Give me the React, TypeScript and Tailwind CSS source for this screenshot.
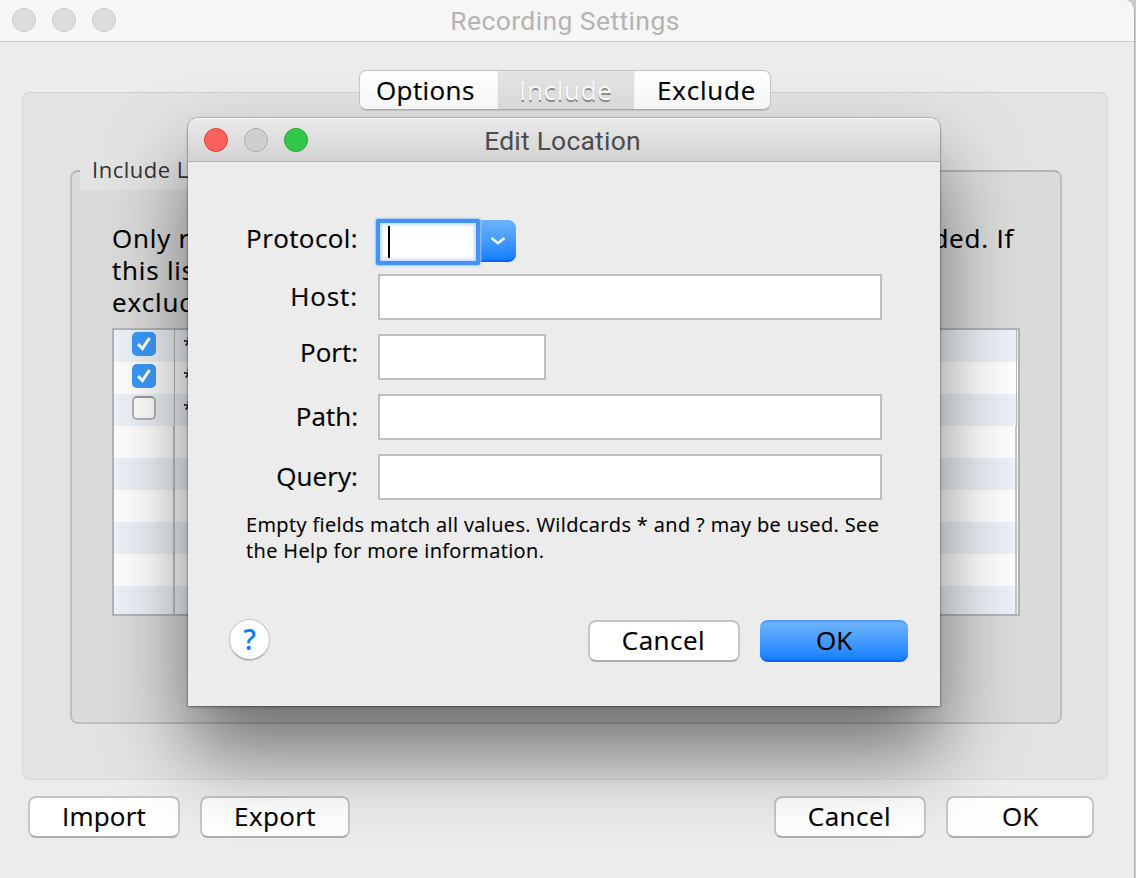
import type { ReactNode } from "react";

const body = "font-['Open_Sans','Noto_Sans',sans-serif]";

function Button({ children, className = "" }: { children: ReactNode; className?: string }) {
  return (
    <button
      className={`flex h-[42px] shrink-0 items-center justify-center rounded-[8px] border-2 border-[#c6c6c6] border-b-[#acacac] bg-white pb-[2px] text-[26px] leading-none text-black [-webkit-text-stroke:0.2px_black] ${className}`}
    >
      {children}
    </button>
  );
}

function Light({ className }: { className: string }) {
  return <span className={`size-6 rounded-full border ${className}`} />;
}

function Check({ on }: { on: boolean }) {
  if (!on) {
    return (
      <span className="size-6 rounded-[5px] border-2 border-[#b5b5b5] border-t-[#9c9c9c] bg-white" />
    );
  }
  return (
    <span className="flex size-6 items-center justify-center rounded-[5px] bg-[#3b99fc]">
      <svg viewBox="0 0 24 24" className="size-6" fill="none" stroke="#fff" strokeWidth="3">
        <path d="M6 12 10.4 16.6 17.6 5.8" />
      </svg>
    </span>
  );
}

const rows: (boolean | null)[] = [true, true, false, null, null, null, null, null, null];

function Table() {
  return (
    <div className="mt-[10px] h-[288px] w-[908px] overflow-hidden border-2 border-[#b4b4b4] bg-white">
      {rows.map((on, i) => (
        <div
          key={i}
          className={`flex h-8 ${i % 2 === 0 ? "bg-[#edf2f8]" : "bg-white"}`}
        >
          <div
            className={`flex w-[61px] shrink-0 justify-center pt-[2px] ${
              on === null ? "border-r-2 border-[#c0c0c0]" : "border-r border-[#b8b8b8]"
            }`}
          >
            {on !== null && <Check on={on} />}
          </div>
          <div
            className={`mr-px grow pl-[8px] text-[20px] leading-[30px] ${
              on === null ? "border-r-2 border-[#c8c8c8]" : "border-r border-[#b8b8b8]"
            }`}
          >
            {on !== null && "*"}
          </div>
        </div>
      ))}
    </div>
  );
}

function SettingsWindow() {
  return (
    <div className="flex h-full w-[1135px] flex-col overflow-hidden rounded-tr-[10px] border-r border-[#b0b0b0] bg-[#ececec]">
      <header className="grid h-[42px] shrink-0 grid-cols-[1fr_auto_1fr] items-center border-b border-[#cdcdcd] bg-[#f6f6f6] pb-[1px]">
        <div className="flex gap-4 pl-3">
          <Light className="border-[#cbcbcb] bg-[#dcdcdc]" />
          <Light className="border-[#cbcbcb] bg-[#dcdcdc]" />
          <Light className="border-[#cbcbcb] bg-[#dcdcdc]" />
        </div>
        <h1 className="pt-[2px] pr-[4px] font-['Roboto',sans-serif] text-[26.5px] leading-none tracking-[0.4px] text-[#b4b4b4]">
          Recording Settings
        </h1>
      </header>

      <div className="mt-[28px] flex h-[40px] justify-center pr-[4px]">
        <div className="z-10 flex h-[40px] w-[412px] overflow-hidden rounded-[8px] border border-[#c4c4c4] border-b-[#a8a8a8] text-[26px] leading-[39px] text-black shadow-[0_1px_1px_rgba(0,0,0,0.12)]">
          <span className="w-[137px] bg-linear-to-b from-white to-[#f6f6f6] pl-[16px] tracking-[0.4px] [-webkit-text-stroke:0.2px_black]">
            Options
          </span>
          <span className="w-[138px] border-x border-[#f2f2f2] bg-linear-to-b from-[#e4e4e4] to-[#d8d8d8] pl-[21px] tracking-[0.7px] text-[#f8f8f8] [text-shadow:0_1.5px_0.5px_#888]">
            Include
          </span>
          <span className="grow bg-linear-to-b from-white to-[#f4f4f4] pl-[22px] tracking-[0.8px] [-webkit-text-stroke:0.2px_black]">
            Exclude
          </span>
        </div>
      </div>

      <main className="-mt-[18px] ml-[22px] h-[688px] w-[1086px] shrink-0 rounded-[8px] border border-[#dadada] border-t-[#cfcfcf] bg-[#e3e3e3] pt-[77px] pl-[47px]">
        <section className="h-[554px] w-[992px] rounded-[8px] border-2 border-[#bfbfbf] border-t-[#b4b4b4] bg-[#dbdbdb] px-[40px]">
          <div className="-mt-[12px] -ml-[32px] h-[30px] w-[160px] bg-[#e3e3e3] pl-[12px] text-[22px] leading-[18px] tracking-[0.5px] text-[#333]">
            Include Lo
          </div>
          <div className="mt-[32px] w-[902px] text-[26px] leading-[32px] tracking-[0.8px] text-black [-webkit-text-stroke:0.2px_black]">
            <p className="flex justify-between">
              <span>Only r</span>
              <span>ded. If</span>
            </p>
            <p>this lis</p>
            <p>exclud</p>
          </div>
          <Table />
        </section>
      </main>

      <footer className="mt-[16px] flex justify-between pr-[40px] pl-[28px]">
        <div className="flex gap-5">
          <Button className="w-[152px] tracking-[0.2px]">Import</Button>
          <Button className="w-[150px] tracking-[0.4px]">Export</Button>
        </div>
        <div className="flex gap-5">
          <Button className="w-[152px] pr-px tracking-[0.5px]">Cancel</Button>
          <Button className="w-[148px]">OK</Button>
        </div>
      </footer>
    </div>
  );
}

function Field({
  label,
  top = "pt-[2px]",
  tracking = "tracking-[0.2px]",
  width = "w-[504px]",
}: {
  label: string;
  top?: string;
  tracking?: string;
  width?: string;
}) {
  return (
    <div className="flex h-[46px] items-start">
      <span
        className={`w-[170px] text-right text-[26px] leading-[40px] [-webkit-text-stroke:0.2px_black] ${tracking} ${top}`}
      >
        {label}
      </span>
      <span className={`ml-[20px] h-[46px] border-2 border-[#bfbfbf] bg-white ${width}`} />
    </div>
  );
}

function LocationDialog() {
  return (
    <div className="absolute top-[118px] left-[188px] flex h-[588px] w-[752px] flex-col rounded-t-[10px] bg-[#ececec] text-black shadow-[0_0_0_1px_rgba(0,0,0,0.12),0_1px_3px_rgba(0,0,0,0.35),0_46px_80px_rgba(0,0,0,0.5)]">
      <header className="grid h-[44px] shrink-0 grid-cols-[1fr_auto_1fr] items-center rounded-t-[10px] border-t border-b border-t-[#f6f6f6] border-b-[#b1b1b1] bg-linear-to-b from-[#eaeaea] to-[#d2d2d2]">
        <div className="flex gap-4 pl-4">
          <Light className="border-[#e0443e] bg-[#fc605b]" />
          <Light className="border-[#acacac] bg-[#cfcfcf]" />
          <Light className="border-[#24a835] bg-[#34c84a]" />
        </div>
        <h2 className="pt-[2px] pr-[3px] font-['Roboto',sans-serif] text-[26.5px] leading-none tracking-[0.2px] text-[#4c4c4c]">
          Edit Location
        </h2>
      </header>

      <div className="mt-[56px] flex h-[48px] items-start">
        <span className="w-[170px] text-right text-[26px] leading-[40px] tracking-[0.4px] [-webkit-text-stroke:0.2px_black]">
          Protocol:
        </span>
        <div className="ml-[18px] flex">
          <span className="z-10 mt-px h-[46px] w-[104px] rounded-[2px] border-4 border-[#4491f8] bg-white pt-[3px] pl-[8px] shadow-[0_0_2px_1px_#9cc5fb,inset_0_0_3px_2px_#c3dbfb]">
            <span className="block h-8 w-[2px] bg-black" />
          </span>
          <span className="mt-[2px] flex h-[42px] w-[36px] items-center justify-center rounded-r-[8px] border-b-2 border-[#0a60ff] bg-linear-to-b from-[#6cb3fa] to-[#0d80ff] pt-[2px]">
            <svg viewBox="0 0 16 10" className="h-[10px] w-4" fill="none" stroke="#fff" strokeWidth="2.4">
              <path d="M1.5 2 8 7.3 14.5 2" />
            </svg>
          </span>
        </div>
      </div>

      <div className="mt-[8px] flex flex-col gap-[14px]">
        <Field label="Host:" tracking="tracking-[0.9px]" />
        <Field label="Port:" top="-mt-[2px]" tracking="tracking-[0px]" width="w-[168px]" />
        <Field label="Path:" tracking="tracking-[0px]" />
        <Field label="Query:" tracking="tracking-[0.1px]" />
      </div>

      <p className="mt-[12px] ml-[58px] text-[20px] leading-[26px] tracking-[0.37px] whitespace-nowrap [-webkit-text-stroke:0.15px_black]">
        Empty fields match all values. Wildcards * and ? may be used. See
        <br />
        the Help for more information.
      </p>

      <div className="mt-[55px] flex items-start pr-[32px] pl-[41px]">
        <button className="flex size-[41px] items-center justify-center rounded-full border border-[#c4c4c4] border-b-[#a4a4a4] bg-white pb-[2px] text-[28px] leading-none font-semibold text-[#0d80ff] shadow-[0_1px_1px_rgba(0,0,0,0.15)]">
          ?
        </button>
        <div className="mt-px ml-auto flex gap-5">
          <Button className="w-[152px] pr-px tracking-[0.5px]">Cancel</Button>
          <button className="flex h-[42px] w-[148px] items-center justify-center rounded-[8px] border-y-2 border-t-[#489bf6] border-b-[#0a60ff] bg-linear-to-b from-[#6cb3fa] to-[#0d80ff] pb-[2px] text-[26px] leading-none [-webkit-text-stroke:0.2px_black]">
            OK
          </button>
        </div>
      </div>
    </div>
  );
}

export default function App() {
  return (
    <div className={`relative h-[878px] w-[1136px] overflow-hidden bg-[#c9cad2] ${body}`}>
      <SettingsWindow />
      <LocationDialog />
    </div>
  );
}
